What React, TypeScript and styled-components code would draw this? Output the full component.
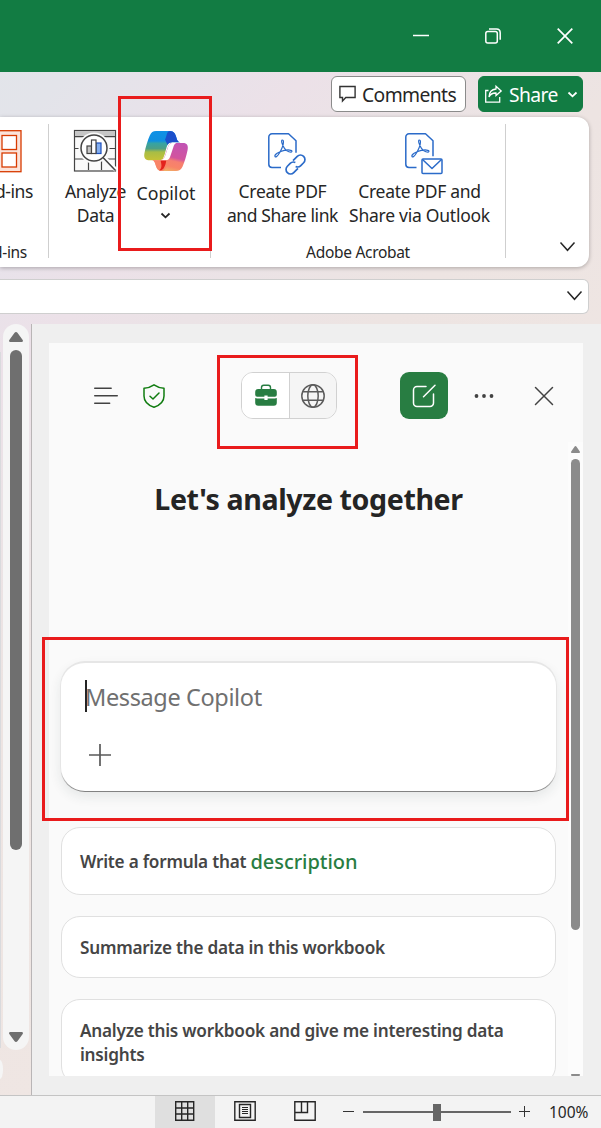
import React from 'react';
import styled, { createGlobalStyle } from 'styled-components';

const Global = createGlobalStyle`
  * { box-sizing: border-box; }
  html, body { margin: 0; padding: 0; }
  body { width: 601px; height: 1128px; overflow: hidden; font-family: 'Noto Sans', 'Open Sans', sans-serif; color: #262626; }
  button { font: inherit; color: inherit; padding: 0; margin: 0; border: 0; background: none; }
  svg { display: block; flex: none; overflow: visible; }
`;

const Window = styled.div`
  position: relative;
  display: flex;
  flex-direction: column;
  width: 601px;
  height: 1128px;
  overflow: hidden;
  background: linear-gradient(135deg, #e2e5ea 0px, #e3e4ea 100px, #e8e2ea 190px, #ece1e8 270px, #ebe3e6 360px, #ede4e2 500px, #efe6e3 800px);
`;

const TitleBar = styled.header`
  display: flex;
  flex: none;
  justify-content: flex-end;
  align-items: center;
  gap: 56px;
  height: 72px;
  padding-right: 28px;
  background: #127c43;
`;

const Actions = styled.div`
  display: flex;
  flex: none;
  justify-content: flex-end;
  gap: 12px;
  height: 45px;
  padding: 4px 18px 0 0;
`;

const ActionButton = styled.button<{ $primary?: boolean }>`
  display: flex;
  align-items: center;
  width: ${p => (p.$primary ? 105 : 135)}px;
  height: 36px;
  padding-left: ${p => (p.$primary ? 6 : 7)}px;
  gap: ${p => (p.$primary ? 7 : 6)}px;
  border-radius: 6px;
  border: 1px solid ${p => (p.$primary ? '#127c43' : '#8b8b8b')};
  background: ${p => (p.$primary ? '#127c43' : '#fff')};
  color: ${p => (p.$primary ? '#fff' : '#262626')};
`;

const ShareMenu = styled.span`
  margin-left: 3px;
`;

const Text = styled.span<{ $size: number; $track?: number; $weight?: number; $line?: number; $color?: string }>`
  display: inline-block;
  font-size: ${p => p.$size}px;
  letter-spacing: ${p => p.$track ?? 0}px;
  font-weight: ${p => p.$weight ?? 400};
  line-height: ${p => (p.$line ? `${p.$line}px` : 'normal')};
  color: ${p => p.$color ?? 'inherit'};
  white-space: nowrap;
`;

const Ribbon = styled.section`
  display: flex;
  flex: none;
  width: 589px;
  height: 150px;
  padding-top: 7px;
  background: #fff;
  border-radius: 0 12px 12px 0;
  box-shadow: 0 1px 4px rgba(0, 0, 0, 0.28);
`;

const Group = styled.div<{ $width: number }>`
  display: flex;
  flex-direction: column;
  justify-content: space-between;
  flex: none;
  width: ${p => p.$width}px;
  height: 134px;
  border-right: 1px solid #cfcfcf;
`;

const Commands = styled.div<{ $pad?: number }>`
  display: flex;
  padding-left: ${p => p.$pad ?? 0}px;
`;

const Command = styled.button<{ $width: number }>`
  display: flex;
  flex-direction: column;
  align-items: center;
  flex: none;
  width: ${p => p.$width}px;
  padding-top: 5px;
`;

const IconSlot = styled.span<{ $h?: number; $left?: number; $right?: number }>`
  display: flex;
  align-items: flex-start;
  height: ${p => p.$h ?? 50}px;
  padding-left: ${p => p.$left ?? 0}px;
  padding-right: ${p => p.$right ?? 0}px;
`;

const EdgeCommand = styled(Command)`
  align-items: flex-end;
  margin-left: -48px;
`;

const MenuMark = styled.span`
  margin-top: 8px;
  padding-right: 2px;
`;

const GroupLabel = styled.div<{ $edge?: boolean }>`
  display: flex;
  justify-content: ${p => (p.$edge ? 'flex-end' : 'center')};
  padding-right: ${p => (p.$edge ? 21 : 0)}px;
  height: 12px;
  align-items: center;
`;

const RibbonTail = styled.div`
  display: flex;
  flex: 1;
  align-items: flex-end;
  justify-content: flex-end;
  padding: 0 14px 16px 0;
`;

const FormulaBar = styled.div`
  display: flex;
  flex: none;
  align-items: center;
  justify-content: flex-end;
  width: 589px;
  height: 35px;
  margin-top: 12px;
  padding: 0 6px 3px 0;
  background: #fff;
  border: 1px solid #cfcfcf;
  border-left: 0;
  border-radius: 0 6px 6px 0;
`;

const Workspace = styled.main`
  display: flex;
  flex: none;
  height: 771px;
  margin-top: 10px;
`;

const Sheet = styled.div`
  display: flex;
  flex: none;
  width: 31px;
`;

const SheetEdge = styled.div`
  display: flex;
  flex-direction: column;
  width: 3px;
  padding-top: 28px;

  &::before { content: ''; width: 1px; height: 696px; background: #d9dadd; }
  &::after { content: ''; width: 3px; height: 19px; margin-top: 12px; background: #f5f5f5; border-radius: 0 3px 3px 0 / 0 9px 9px 0; }
`;

const SheetScroll = styled.div`
  display: flex;
  flex-direction: column;
  align-items: center;
  width: 26px;
  height: 726px;
  padding: 8px 0;
  background: #f5f5f5;
  border-radius: 13px;
`;

const SheetThumb = styled.div`
  width: 12px;
  height: 500px;
  margin: 8px 0 182px;
  border-radius: 6px;
  background: #6f6f6f;
`;

const Pane = styled.aside`
  flex: 1;
  padding: 19px 18px 19px 17px;
  background: #efefef;
  border-left: 1px solid #b9b5b6;
`;

const Panel = styled.div`
  display: flex;
  flex-direction: column;
  height: 733px;
  overflow: hidden;
  background: #fafafa;
`;

const PanelHeader = styled.div`
  display: flex;
  flex: none;
  align-items: center;
  height: 99px;
  padding: 6px 0 0 45px;
`;

const Gap = styled.div<{ $w: number }>`
  flex: none;
  width: ${p => p.$w}px;
`;

const Toggle = styled.div`
  display: flex;
  flex: none;
  width: 96px;
  height: 47px;
  border: 1px solid #d1d1d1;
  border-radius: 12px;
  overflow: hidden;
`;

const ToggleSide = styled.button<{ $active?: boolean }>`
  display: flex;
  align-items: center;
  justify-content: center;
  width: ${p => (p.$active ? 48 : 46)}px;
  background: ${p => (p.$active ? '#fff' : '#f5f5f5')};
  border-right: ${p => (p.$active ? '1px solid #d1d1d1' : '0')};
`;

const NewChat = styled.button`
  display: flex;
  align-items: center;
  justify-content: center;
  flex: none;
  width: 48px;
  height: 47px;
  border-radius: 9px;
  background: #287d42;
`;

const PanelBody = styled.div`
  display: flex;
  flex: 1;
  min-height: 0;
`;

const Content = styled.div`
  display: flex;
  flex-direction: column;
  width: 519px;
  padding: 36px 12px 0 12px;
`;

const Heading = styled.h1`
  display: flex;
  flex: none;
  justify-content: center;
  margin: 0;
  height: 183px;
`;

const Composer = styled.div`
  flex: none;
  width: 497px;
  height: 131px;
  margin-left: -1px;
  padding: 17px 0 0 24px;
  background:
    linear-gradient(#fff, #fff) padding-box,
    linear-gradient(#e6e6e6 0, #e6e6e6 84%, #808080 100%) border-box;
  border: solid transparent;
  border-width: 2px 1px 1px 1px;
  border-radius: 25px;
  box-shadow: 0 5px 12px rgba(30, 60, 60, 0.09);
`;

const Field = styled.div`
  display: flex;
  align-items: center;
  height: 32px;
  margin-bottom: 31px;

  &::before { content: ''; width: 2px; height: 32px; margin-right: -2px; background: #242424; flex: none; }
  > span { padding-top: 1px; }
`;

const AttachButton = styled.button`
  display: block;
  margin-left: 3px;
`;

const Suggestion = styled.button<{ $h: number; $top: number }>`
  display: flex;
  align-items: center;
  flex: none;
  width: 495px;
  height: ${p => p.$h}px;
  margin-top: ${p => p.$top}px;
  padding: 1px 0 0 18px;
  text-align: left;
  background: #fff;
  border: 1px solid #e0e0e0;
  border-radius: 19px;
  color: #454545;
`;

const Lines = styled.span`
  display: flex;
  flex-direction: column;
  align-items: flex-start;
`;

const PanelScroll = styled.div`
  display: flex;
  flex-direction: column;
  align-items: center;
  width: 15px;
  padding-top: 4px;
  background: #fcfcfc;
`;

const PanelThumb = styled.div`
  flex: none;
  width: 9px;
  height: 471px;
  margin: 6px 0 144px;
  border-radius: 5px;
  background: #8b8b8b;
`;

const StatusBar = styled.footer`
  display: flex;
  flex: none;
  align-items: center;
  height: 33px;
  padding-left: 155px;
  background: #f3f3f3;
  border-top: 1px solid #c4c4c4;
`;

const ViewButton = styled.button<{ $active?: boolean }>`
  display: flex;
  justify-content: center;
  width: 60px;
  height: 32px;
  padding-top: 5px;
  background: ${p => (p.$active ? '#dfdfdf' : 'transparent')};
`;

const Slider = styled.div`
  display: flex;
  align-items: center;
  justify-content: center;
  width: 148px;
  height: 17px;
  margin: 0 8px;
  background: linear-gradient(#666, #666) center / 100% 2px no-repeat;

  &::after { content: ''; width: 8px; height: 17px; background: #666; }
`;

const Callout = styled.div<{ $x: number; $y: number; $w: number; $h: number }>`
  position: absolute;
  left: ${p => p.$x}px;
  top: ${p => p.$y}px;
  width: ${p => p.$w}px;
  height: ${p => p.$h}px;
  border: 3px solid #e91b1c;
  pointer-events: none;
`;

const Chevron = ({ w, h, sw = 1.5, color = '#262626' }: { w: number; h: number; sw?: number; color?: string }) => (
  <svg width={w} height={h} viewBox={`0 0 ${w} ${h}`} fill="none" stroke={color} strokeWidth={sw}>
    <path d={`M.5 .5 L${w / 2} ${h - 0.7} L${w - 0.5} .5`} />
  </svg>
);

const AddInsIcon = () => (
  <svg width="44" height="44" viewBox="0 0 44 44" fill="none" stroke="#d83b01" strokeWidth="1.3">
    <rect x="1" y="1.700" width="41" height="41" fill="#fbe3d9" />
    <rect x="23" y="6.500" width="14.500" height="14" fill="#fff" />
    <rect x="23" y="24" width="14.500" height="14" fill="#fff" />
    <rect x="5" y="24" width="14" height="14" fill="#fff" />
  </svg>
);

const AnalyzeIcon = () => (
  <svg width="44" height="44" viewBox="0 0 44 44" fill="none" stroke="#444" strokeWidth="1.2">
    <rect x="1.500" y="1.500" width="41" height="40.500" fill="#fafafa" />
    <rect x="2" y="2" width="40" height="5.500" fill="#c6c6c6" stroke="none" />
    <path d="M2 7.600h40M2 19.500h40M2 30h40M15.500 31v10M28.500 31v10" />
    <circle cx="21" cy="19" r="15.500" fill="#fafafa" stroke="none" />
    <circle cx="21" cy="19" r="13" fill="#fff" strokeWidth="1.500" />
    <path d="M31 28.500l12 12.500" stroke="#fff" strokeWidth="4" />
    <path d="M30 28.500l12.500 13" strokeWidth="1.600" />
    <rect x="14" y="17" width="4.500" height="7.500" fill="#c6c6c6" />
    <rect x="23" y="14" width="5" height="10.500" fill="#83aef0" stroke="#1d4fbd" />
    <rect x="18.500" y="11" width="4.500" height="13.500" fill="#fff" />
  </svg>
);

const CopilotIcon = () => (
  <svg width="46" height="46" viewBox="0 0 46 46">
    <defs>
      <linearGradient id="cpLeft" x1="0" y1="0" x2="0" y2="1">
        <stop offset="0" stopColor="#0f91e6" />
        <stop offset=".34" stopColor="#108fdf" />
        <stop offset=".42" stopColor="#35a3a5" />
        <stop offset=".6" stopColor="#4d9f86" />
        <stop offset=".72" stopColor="#a8bd45" />
        <stop offset="1" stopColor="#c6c236" />
      </linearGradient>
      <linearGradient id="cpRight" x1=".7" y1="0" x2=".4" y2="1">
        <stop offset="0" stopColor="#c254b3" />
        <stop offset=".5" stopColor="#d2549e" />
        <stop offset=".62" stopColor="#f67f70" />
        <stop offset=".82" stopColor="#f98467" />
        <stop offset="1" stopColor="#f0b166" />
      </linearGradient>
    </defs>
    <path d="M13 2h14c4 0 5.500 3 6.500 7 .6 2.600 1.700 4.300 4 4.300h-8c-3.500 0-5 1.800-6 5.200L21.800 25l-1.600 4.200c-.7 1.500-2 2-4 2H7c-4.300 0-6.500-2-5.600-6.800C2.600 18 4.800 11 6.800 6.500 8.200 3.300 10 2 13 2z" fill="url(#cpLeft)" />
    <path d="M27 2c4 0 5.500 3 6.500 7 .6 2.600 1.700 4.300 4 4.300h-8c-2.600 0-4 .8-5 2.700l-2.500-5.500c2-3.500 1.500-8.500 5-8.500z" fill="#1b4fcb" />
    <path d="M33 42H19c-4 0-5.500-3-6.500-6.600-.6-2.500-1.700-4.200-3.500-4.200h7.500c3.500 0 4.700-2 5.800-5.400l2.200-6.600c1-3.200 2-5.200 5-5.200H40c4 0 5.500 2.400 4.600 7-1.200 6-3.200 12.400-5 16.500C38.200 40.700 36 42 33 42z" fill="url(#cpRight)" />
    <path d="M24.500 29.500c-2 1.600-4.500 1.700-8 1.700H9c1.800 0 2.900 1.700 3.500 4.200C13.500 39 15 42 19 42c4 0 5.200-7 5.500-12.500z" fill="#f98467" />
    <path d="M17.500 31.200h5.800C22.500 37 20.500 42 16 41.300c3.500-2 2.500-6 1.500-10.100z" fill="#e3221d" />
    <path d="M33.500 13.800h-3.200c-3.400 0-4.600 2.300-5.600 5.400l-2.200 6.600c-1.100 3.400-2.300 5.400-5.800 5.400h6c2.500 0 3.800-1.500 4.500-3.700l3.200-9.500c.9-2.500 1.600-4.200 4.800-4.200z" fill="#fff" />
  </svg>
);

const PdfIcon = ({ kind }: { kind: 'link' | 'mail' }) => (
  <svg width="42" height="44" viewBox="0 0 42 44" fill="none" stroke="#2b6bc9" strokeWidth="1.500" strokeLinejoin="round">
    <path d={kind === 'mail' ? 'M15.500 38.500H8a3.200 3.200 0 0 1-3.200-3.200V8A3.200 3.200 0 0 1 8 4.800h16.500l7.500 7v15.500' : 'M17 38.500H8a3.200 3.200 0 0 1-3.200-3.200V8A3.200 3.200 0 0 1 8 4.800h16.500l7.500 7v12'} />
    <path d="M11 27.500c1.500 1.800 5-3.600 7-8.500s1.800-8 .3-8-.3 5 2.200 8.300c2.400 3.400 6.800 4.700 7.400 3.200.6-1.600-4-2-8.500-.9s-9.400 4-8.400 5.900z" strokeWidth="1.200" />
    {kind === 'mail' ? (
      <g>
        <rect x="21" y="30" width="20" height="14.500" rx="1" fill="#fff" />
        <path d="M21.500 30.500l9.500 9 9.500-9" />
      </g>
    ) : (
      <g transform="translate(31.500 35.500) rotate(-45)" strokeWidth="1.700">
        <path d="M-1 4.500h-6a4.500 4.500 0 0 1 0-9h4a4.500 4.500 0 0 1 4.300 3" />
        <path d="M1-4.500h6a4.500 4.500 0 0 1 0 9H3a4.500 4.500 0 0 1-4.300-3" />
      </g>
    )}
  </svg>
);

const ScrollArrow = ({ w, h, color, down }: { w: number; h: number; color: string; down?: boolean }) => (
  <svg width={w} height={h} viewBox="0 0 14 10" preserveAspectRatio="none" fill={color}>
    <path d="M1.200 10h11.600c1.200 0 1.500-1.200.9-2L8.600 1C7.700-.3 6.300-.3 5.400 1L.3 8c-.6.800-.3 2 .9 2z" transform={down ? 'rotate(180 7 5)' : undefined} />
  </svg>
);

export default function App() {
  return (
    <Window>
      <Global />
      <TitleBar>
        <svg width="16" height="16" viewBox="0 0 16 16" stroke="#fff" strokeWidth="1.500"><path d="M0 7.500h16" /></svg>
        <svg width="16" height="16" viewBox="0 0 16 16" fill="none" stroke="#fff" strokeWidth="1.500">
          <rect x=".8" y="3.500" width="11.500" height="11.500" rx="2" />
          <path d="M4 1h7.500c2.300 0 3.700 1.500 3.700 3.800v7" />
        </svg>
        <svg width="16" height="16" viewBox="0 0 16 16" stroke="#fff" strokeWidth="1.700"><path d="M.7 .7l14.600 14.600M15.300.7l-14.600 14.600" /></svg>
      </TitleBar>

      <Actions>
        <ActionButton>
          <svg width="17" height="18" viewBox="0 0 17 18" fill="none" stroke="#333" strokeWidth="1.400">
            <path d="M.9 1.500h15.200v11H6.800L3.500 16v-3.500H.9z" />
          </svg>
          <Text $size={19.300} $track={-0.6}>Comments</Text>
        </ActionButton>
        <ActionButton $primary>
          <svg width="17" height="18" viewBox="0 0 17 18" fill="none" stroke="#fff" strokeWidth="1.300">
            <path d="M3.500 5.500H.7v11.700h14V12" />
            <path d="M11 1.200l5.200 4.700L11 10.600V8C7.500 7.800 5.200 9.500 4 12c.2-4.500 2.800-7.700 7-8z" />
          </svg>
          <Text $size={19.300} $track={-0.6}>Share</Text>
          <ShareMenu><Chevron w={9} h={5} sw={1.800} color="#fff" /></ShareMenu>
        </ActionButton>
      </Actions>

      <Ribbon>
        <Group $width={49}>
          <Commands>
            <EdgeCommand $width={81}>
              <IconSlot $right={10}><AddInsIcon /></IconSlot>
              <Text $size={17.500} $track={-0.4} $line={24}>Add-ins</Text>
            </EdgeCommand>
          </Commands>
          <GroupLabel $edge><Text $size={15.500} $track={-0.3}>Add-ins</Text></GroupLabel>
        </Group>
        <Group $width={162}>
          <Commands $pad={11}>
            <Command $width={71}>
              <IconSlot $right={2}><AnalyzeIcon /></IconSlot>
              <Text $size={17.500} $track={-0.3} $line={24}>Analyze</Text>
              <Text $size={17.500} $track={-0.3} $line={24}>Data</Text>
            </Command>
            <Command $width={70}>
              <IconSlot $h={52}><CopilotIcon /></IconSlot>
              <Text $size={17.700} $track={0} $line={24}>Copilot</Text>
              <MenuMark><Chevron w={9} h={5} sw={1.800} /></MenuMark>
            </Command>
          </Commands>
        </Group>
        <Group $width={295}>
          <Commands $pad={10}>
            <Command $width={123}>
              <IconSlot $left={4}><PdfIcon kind="link" /></IconSlot>
              <Text $size={17.500} $track={-0.3} $line={24}>Create PDF</Text>
              <Text $size={17.500} $track={-0.4} $line={24}>and Share link</Text>
            </Command>
            <Command $width={151}>
              <IconSlot $left={4}><PdfIcon kind="mail" /></IconSlot>
              <Text $size={17.500} $track={-0.3} $line={24}>Create PDF and</Text>
              <Text $size={17.500} $track={-0.25} $line={24}>Share via Outlook</Text>
            </Command>
          </Commands>
          <GroupLabel><Text $size={15.500} $track={-0.3}>Adobe Acrobat</Text></GroupLabel>
        </Group>
        <RibbonTail><Chevron w={15} h={9} /></RibbonTail>
      </Ribbon>

      <FormulaBar><Chevron w={15} h={9} /></FormulaBar>

      <Workspace>
        <Sheet>
          <SheetEdge />
          <SheetScroll>
            <ScrollArrow w={14} h={10} color="#6f6f6f" />
            <SheetThumb />
            <ScrollArrow w={14} h={10} color="#6f6f6f" down />
          </SheetScroll>
        </Sheet>
        <Pane>
          <Panel>
            <PanelHeader>
              <svg width="24" height="24" viewBox="0 0 24 24" stroke="#424242" strokeWidth="1.400" strokeLinecap="round">
                <path d="M.7 4.200h16.500M.7 11.700h22.600M.7 19.300h15" />
              </svg>
              <Gap $w={24} />
              <svg width="24" height="24" viewBox="0 0 24 24" fill="none" stroke="#107c10" strokeWidth="1.500" strokeLinejoin="round" strokeLinecap="round">
                <path d="M12 .8c3 2 5.800 3.200 10 3.500V12c0 5.300-4 9.200-10 11.300C6 21.200 2 17.300 2 12V4.300C6.200 4 9 2.800 12 .8z" />
                <path d="M8 12.200l3 2.800 6-6" />
              </svg>
              <Gap $w={75} />
              <Toggle>
                <ToggleSide $active>
                  <svg width="24" height="24" viewBox="0 0 24 24" fill="#287d42">
                    <path d="M7.500 5V3.500c0-1.400.9-2.300 2.200-2.300h4.600c1.300 0 2.200.9 2.200 2.300V5" fill="none" stroke="#287d42" strokeWidth="1.400" />
                    <path d="M4.200 5h15.600a3 3 0 0 1 3 3v2.700a2 2 0 0 1-2 2h-7.200v-1.200h-3.200v1.200H3.200a2 2 0 0 1-2-2V8a3 3 0 0 1 3-3z" />
                    <path d="M1.200 13.900c.6.300 1.200.5 2 .5h7.200v1.500h3.200v-1.500h7.200c.8 0 1.400-.2 2-.5v4.800a3 3 0 0 1-3 3H4.200a3 3 0 0 1-3-3z" />
                  </svg>
                </ToggleSide>
                <ToggleSide>
                  <svg width="24" height="24" viewBox="0 0 24 24" fill="none" stroke="#5c5c5c" strokeWidth="1.500">
                    <circle cx="12" cy="12" r="11.200" /><ellipse cx="12" cy="12" rx="5.200" ry="11.200" />
                    <path d="M1.800 7.800h20.400M1.800 16.200h20.400" />
                  </svg>
                </ToggleSide>
              </Toggle>
              <Gap $w={63} />
              <NewChat>
                <svg width="24" height="24" viewBox="0 0 24 24" fill="none" stroke="#fff" strokeWidth="1.500" strokeLinecap="round">
                  <path d="M14 2.500H5A3.500 3.500 0 0 0 1.500 6v13A3.500 3.500 0 0 0 5 22.500h13a3.500 3.500 0 0 0 3.500-3.500v-9M11.500 12.800L23 1.300" />
                </svg>
              </NewChat>
              <Gap $w={24} />
              <svg width="24" height="24" viewBox="0 0 24 24" fill="#424242">
                <circle cx="4.500" cy="12" r="1.900" /><circle cx="12" cy="12" r="1.900" /><circle cx="19.500" cy="12" r="1.900" />
              </svg>
              <Gap $w={36} />
              <svg width="24" height="24" viewBox="0 0 24 24" stroke="#424242" strokeWidth="1.500" strokeLinecap="round"><path d="M3.500 3.500l17 17M20.500 3.500l-17 17" /></svg>
            </PanelHeader>
            <PanelBody>
              <Content>
                <Heading><Text $size={28.600} $weight={700} $line={42} $track={-0.4} $color="#242424">Let's analyze together</Text></Heading>
                <Composer>
                  <Field><Text $size={23.500} $track={-0.38} $color="#707070">Message Copilot</Text></Field>
                  <AttachButton>
                    <svg width="24" height="24" viewBox="0 0 24 24" stroke="#5a5a5a" strokeWidth="1.700"><path d="M1 12h22M12 1v22" /></svg>
                  </AttachButton>
                </Composer>
                <Suggestion $h={68} $top={35}>
                  <Text $size={17.200} $weight={600} $track={-0.23}>Write a formula that&nbsp;</Text>
                  <Text $size={20} $weight={500} $track={-0.05} $color="#287d42">description</Text>
                </Suggestion>
                <Suggestion $h={62} $top={21}>
                  <Text $size={17.200} $weight={600} $track={-0.26}>Summarize the data in this workbook</Text>
                </Suggestion>
                <Suggestion $h={86} $top={21}>
                  <Lines>
                    <Text $size={17.200} $weight={600} $track={-0.24} $line={24}>Analyze this workbook and give me interesting data</Text>
                    <Text $size={17.200} $weight={600} $track={-0.24} $line={24}>insights</Text>
                  </Lines>
                </Suggestion>
              </Content>
              <PanelScroll>
                <ScrollArrow w={9} h={7} color="#8b8b8b" />
                <PanelThumb />
                <ScrollArrow w={9} h={7} color="#8b8b8b" down />
              </PanelScroll>
            </PanelBody>
          </Panel>
        </Pane>
      </Workspace>

      <StatusBar>
        <ViewButton $active>
          <svg width="20" height="20" viewBox="0 0 20 20" fill="none" stroke="#262626" strokeWidth="1.400">
            <path d="M.7 .7h18v18.600h-18zM.7 7h18M.7 13h18M6.700 .7v18.600M12.700 .7v18.600" />
          </svg>
        </ViewButton>
        <ViewButton>
          <svg width="22" height="20" viewBox="0 0 22 20" fill="none" stroke="#262626" strokeWidth="1.400">
            <path d="M.8 .8h20.400v18.400h-20.400zM5.500 3.500h11v13h-11z" />
            <path d="M8 6.500h6M8 8.500h6M8 10.500h6M8 12.500h6" strokeWidth="1" />
          </svg>
        </ViewButton>
        <ViewButton>
          <svg width="22" height="20" viewBox="0 0 22 20" fill="none" stroke="#262626" strokeWidth="1.400">
            <path d="M.8 .8h20.400v18.400h-20.400zM.8 11.500h12.700V.8M7.500 .8v10.700" />
          </svg>
        </ViewButton>
        <Gap $w={8} />
        <svg width="12" height="12" viewBox="0 0 12 12" stroke="#333" strokeWidth="1"><path d="M0 5.500h11" /></svg>
        <Slider />
        <svg width="12" height="12" viewBox="0 0 12 12" stroke="#333" strokeWidth="1"><path d="M0 5.500h11M5.500 0v11" /></svg>
        <Gap $w={18} />
        <Text $size={15.500} $track={0}>100%</Text>
      </StatusBar>

      <Callout $x={118} $y={96} $w={94} $h={155} />
      <Callout $x={217} $y={355} $w={141} $h={94} />
      <Callout $x={42} $y={637} $w={527} $h={184} />
    </Window>
  );
}
